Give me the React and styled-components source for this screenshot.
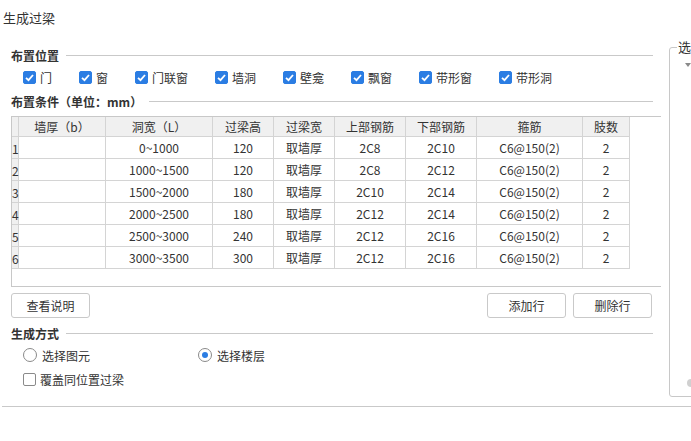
import React from 'react';
import styled, { createGlobalStyle } from 'styled-components';

const GlobalStyle = createGlobalStyle`
  body {
    margin: 0;
    background: #fff;
    font-family: "Noto Sans CJK SC", "Noto Sans", sans-serif;
    color: #333;
  }
`;

const positions = ['门', '窗', '门联窗', '墙洞', '壁龛', '飘窗', '带形窗', '带形洞'];

const columns = [
  { key: 'no', title: '', width: 7 },
  { key: 'b', title: '墙厚（b）', width: 87 },
  { key: 'l', title: '洞宽（L）', width: 107 },
  { key: 'h', title: '过梁高', width: 61 },
  { key: 'w', title: '过梁宽', width: 61 },
  { key: 'top', title: '上部钢筋', width: 71 },
  { key: 'bottom', title: '下部钢筋', width: 71 },
  { key: 'stirrup', title: '箍筋', width: 106 },
  { key: 'legs', title: '肢数', width: 47 },
];

const rows = [
  ['1', '', '0~1000', '120', '取墙厚', '2C8', '2C10', 'C6@150(2)', '2'],
  ['2', '', '1000~1500', '120', '取墙厚', '2C8', '2C12', 'C6@150(2)', '2'],
  ['3', '', '1500~2000', '180', '取墙厚', '2C10', '2C14', 'C6@150(2)', '2'],
  ['4', '', '2000~2500', '180', '取墙厚', '2C12', '2C14', 'C6@150(2)', '2'],
  ['5', '', '2500~3000', '240', '取墙厚', '2C12', '2C16', 'C6@150(2)', '2'],
  ['6', '', '3000~3500', '300', '取墙厚', '2C12', '2C16', 'C6@150(2)', '2'],
];

const CheckBox = ({ checked }) => (
  <Box $checked={checked}>
    {checked && (
      <svg width="11" height="11" viewBox="0 0 11 11">
        <polyline points="2,5.8 4.5,8.2 9,3" fill="none" stroke="#fff" strokeWidth="1.8" />
      </svg>
    )}
  </Box>
);

const App = () => {
  return (
    <Page>
      <GlobalStyle />
      <Title>生成过梁</Title>
      <Body>
        <LeftPane>
          <SectionHeader>
            <span>布置位置</span>
          </SectionHeader>
          <CheckRow>
            {positions.map((p) => (
              <CheckItem key={p}>
                <CheckBox checked />
                {p}
              </CheckItem>
            ))}
          </CheckRow>

          <SectionHeader $gap={8}>
            <span>布置条件（单位：mm）</span>
          </SectionHeader>
          <TableBox>
            <Grid>
              {columns.map((c) => (
                <HeadCell key={c.key}>{c.title}</HeadCell>
              ))}
              {rows.map((r) =>
                r.map((v, i) =>
                  i === 0 ? (
                    <NumCell key={r[0] + i}>{v}</NumCell>
                  ) : (
                    <Cell key={r[0] + i}>{v}</Cell>
                  )
                )
              )}
            </Grid>
          </TableBox>

          <ButtonRow>
            <Button>查看说明</Button>
            <ButtonGroup>
              <Button>添加行</Button>
              <Button>删除行</Button>
            </ButtonGroup>
          </ButtonRow>

          <SectionHeader $gap={7}>
            <span>生成方式</span>
          </SectionHeader>
          <OptionRow>
            <RadioItem $width={175}>
              <Radio />
              选择图元
            </RadioItem>
            <RadioItem>
              <Radio $selected />
              选择楼层
            </RadioItem>
          </OptionRow>
          <OptionRow $gap={8}>
            <CheckItem>
              <CheckBox />
              覆盖同位置过梁
            </CheckItem>
          </OptionRow>
        </LeftPane>

        <SidePanel>
          <Legend>选</Legend>
          <Caret />
          <Knob />
        </SidePanel>
      </Body>
      <FooterLine />
    </Page>
  );
};

const Page = styled.div`
  width: 691px;
  height: 441px;
  overflow: hidden;
  background: #fff;
  font-size: 12px;
`;

const Title = styled.div`
  height: 47px;
  box-sizing: border-box;
  padding: 8px 0 0 3px;
  line-height: 20px;
  font-size: 13px;
  color: #333;
`;

const Body = styled.div`
  display: flex;
  height: 351px;
`;

const LeftPane = styled.div`
  width: 650px;
  padding-left: 11px;
  flex-shrink: 0;
  display: flex;
  flex-direction: column;
`;

const SectionHeader = styled.div`
  display: flex;
  align-items: center;
  height: 16px;
  margin-top: ${(p) => p.$gap || 0}px;
  margin-right: 8px;
  font-size: 12px;
  font-weight: bold;
  color: #333;

  &::after {
    content: '';
    flex: 1;
    height: 1px;
    background: #c9c9c9;
    margin-left: 7px;
  }
`;

const CheckRow = styled.div`
  display: flex;
  align-items: center;
  gap: 27px;
  height: 16px;
  margin-top: 6px;
  padding-left: 12px;
`;

const CheckItem = styled.label`
  display: flex;
  align-items: center;
  gap: 4px;
  font-size: 12px;
  color: #333;
  white-space: nowrap;
`;

const Box = styled.span`
  width: 13px;
  height: 13px;
  box-sizing: border-box;
  border-radius: 2px;
  display: flex;
  align-items: center;
  justify-content: center;
  background: ${(p) => (p.$checked ? '#2b7de3' : '#fff')};
  border: 1px solid ${(p) => (p.$checked ? '#2b7de3' : '#8a8a8a')};
`;

const TableBox = styled.div`
  margin-top: 7px;
  height: 171px;
  box-sizing: border-box;
  border: 1px solid #c8c8c8;
  border-right: none;
  background: #fff;
`;

const Grid = styled.div`
  display: grid;
  grid-template-columns: ${columns.map((c) => c.width + 'px').join(' ')};
  grid-auto-rows: 22px;
  grid-template-rows: 20px;
`;

const HeadCell = styled.div`
  box-sizing: border-box;
  border-right: 1px solid #d4d4d4;
  border-bottom: 1px solid #d4d4d4;
  background: #f0f0f0;
  display: flex;
  align-items: center;
  justify-content: center;
  white-space: nowrap;
  overflow: hidden;
  font-size: 12px;
  color: #333;
`;

const Cell = styled.div`
  box-sizing: border-box;
  border-right: 1px solid #d4d4d4;
  border-bottom: 1px solid #d4d4d4;
  display: flex;
  align-items: center;
  justify-content: center;
  white-space: nowrap;
  font-size: 12px;
  color: #333;
`;

const NumCell = styled(Cell)`
  background: #f0f0f0;
  justify-content: flex-start;
  overflow: visible;
  padding-top: 2px;
`;

const ButtonRow = styled.div`
  display: flex;
  justify-content: space-between;
  margin-top: 6px;
  padding-right: 9px;
`;

const ButtonGroup = styled.div`
  display: flex;
  gap: 7px;
`;

const Button = styled.button`
  width: 79px;
  height: 25px;
  padding: 0;
  background: #fff;
  border: 1px solid #c9c9c9;
  border-radius: 3px;
  font-family: inherit;
  font-size: 12px;
  color: #333;
`;

const OptionRow = styled.div`
  display: flex;
  align-items: center;
  height: 16px;
  margin-top: ${(p) => p.$gap || 6}px;
  padding-left: 12px;
`;

const RadioItem = styled.label`
  display: flex;
  align-items: center;
  gap: 5px;
  width: ${(p) => (p.$width ? p.$width + 'px' : 'auto')};
  font-size: 12px;
  color: #333;
`;

const Radio = styled.span`
  width: 14px;
  height: 14px;
  box-sizing: border-box;
  border-radius: 50%;
  border: 1px solid #8a8a8a;
  display: flex;
  align-items: center;
  justify-content: center;

  &::after {
    content: '';
    display: ${(p) => (p.$selected ? 'block' : 'none')};
    width: 6px;
    height: 6px;
    border-radius: 50%;
    background: #2b7de3;
  }
`;

const SidePanel = styled.div`
  position: relative;
  margin-left: 8px;
  width: 120px;
  height: 350px;
  flex-shrink: 0;
  box-sizing: border-box;
  border: 1px solid #c8c8c8;
  border-radius: 3px;
  padding: 15px 0 0 15px;
`;

const Legend = styled.span`
  position: absolute;
  top: -9px;
  left: 7px;
  padding: 0 1px;
  background: #fff;
  font-size: 13px;
  line-height: 16px;
  color: #333;
`;

const Caret = styled.div`
  width: 0;
  height: 0;
  border-left: 3px solid transparent;
  border-right: 3px solid transparent;
  border-top: 4px solid #8a8a8a;
`;

const Knob = styled.div`
  position: absolute;
  top: 331px;
  left: 17px;
  width: 8px;
  height: 8px;
  border-radius: 50%;
  background: #d0d0d0;
`;

const FooterLine = styled.div`
  height: 1px;
  margin: 8px 0 0 2px;
  background: #c9c9c9;
`;

export default App;
